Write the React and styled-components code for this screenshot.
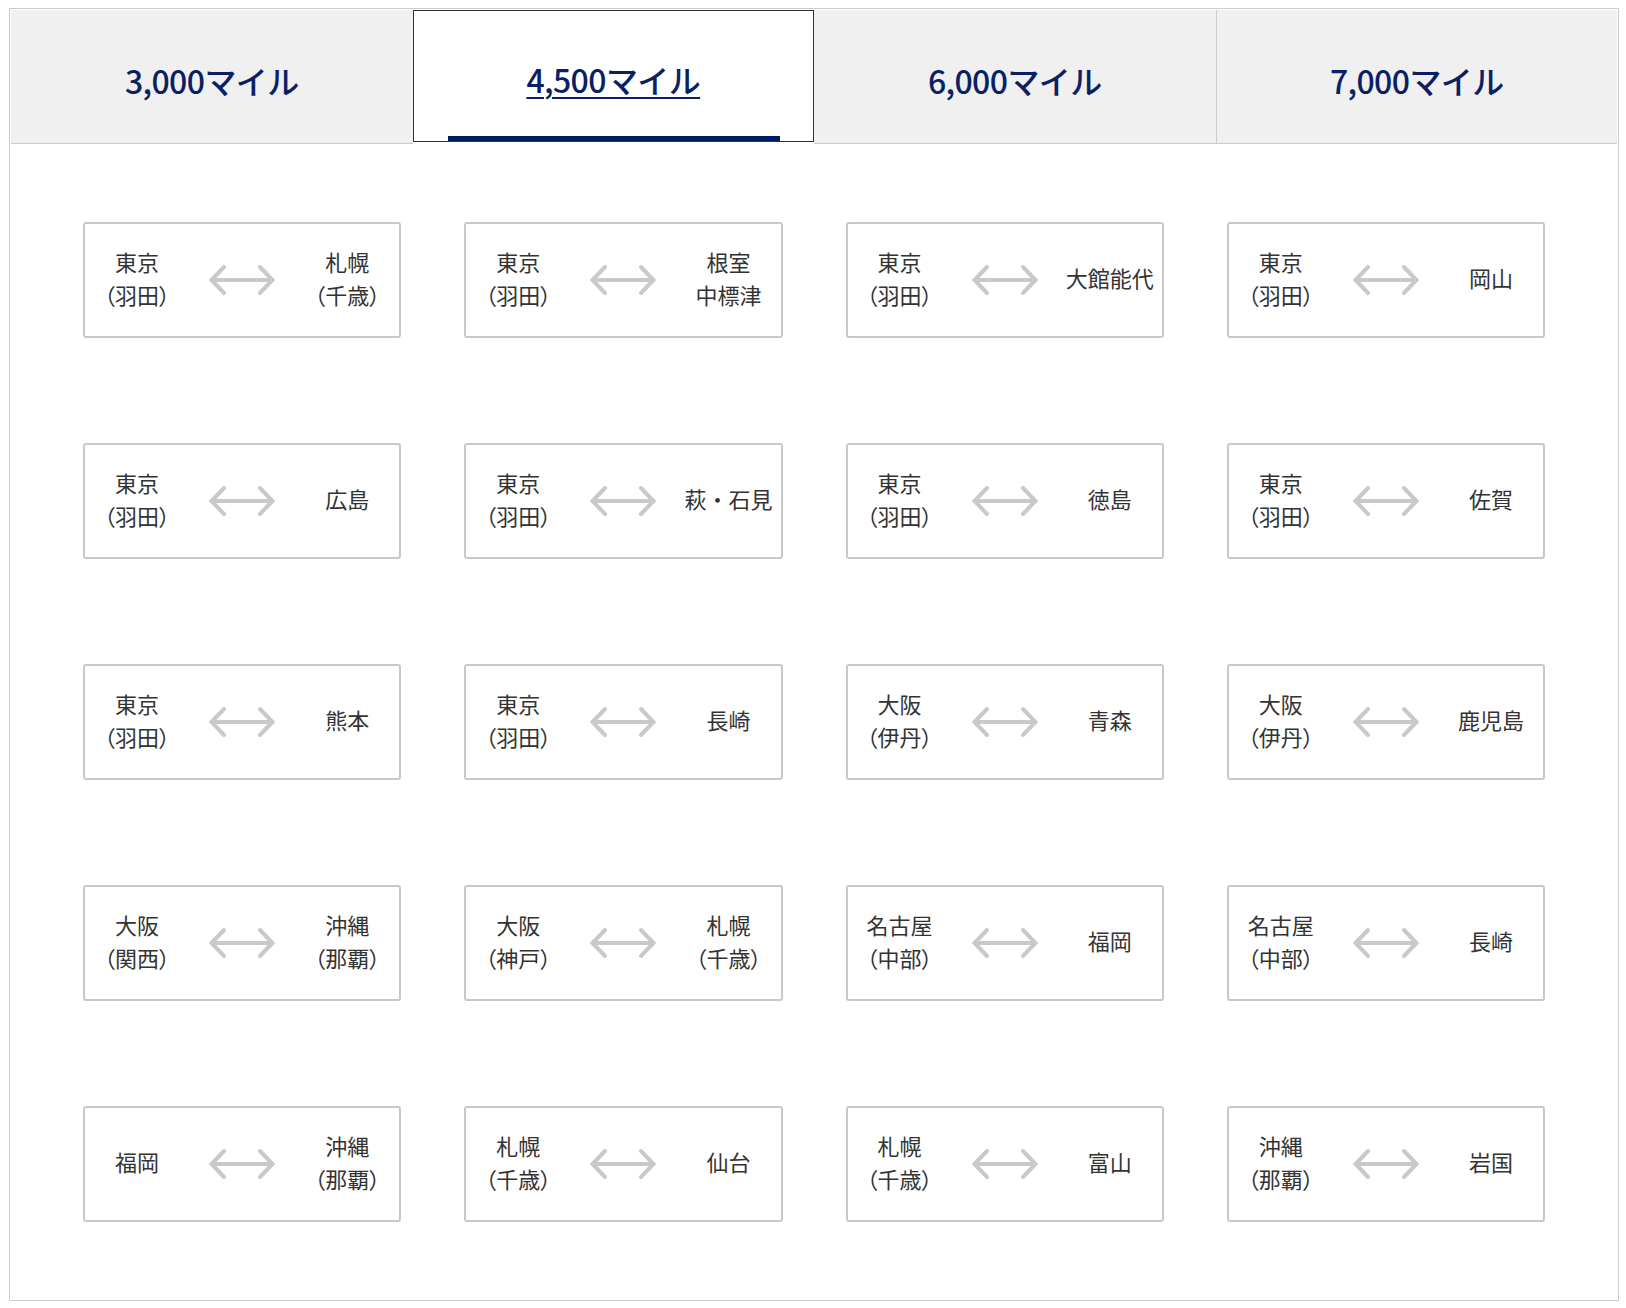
import React, { useState } from "react";
import styled, { createGlobalStyle } from "styled-components";

const GlobalStyle = createGlobalStyle`
  html, body { margin: 0; padding: 0; background: #fff; }
  body { font-family: "Noto Sans CJK JP", "Noto Sans", sans-serif; }
  * { box-sizing: border-box; }
`;

const Panel = styled.div`
  width: 1610px;
  margin: 8px 0 8px 9px;
  border: 1px solid #cccccc;
  background: #fff;
`;

const TabList = styled.div`
  display: grid;
  grid-template-columns: repeat(4, 1fr);
  align-items: start;
  padding: 1px 1px 0 1px;
`;

const Tab = styled.button`
  position: relative;
  min-width: 0;
  height: ${(p) => (p.$active ? "132px" : "134px")};
  margin: 0;
  padding: 6px 0 0;
  border: ${(p) => (p.$active ? "1px solid #333333" : "none")};
  border-bottom: ${(p) => (p.$active ? "1px solid #333333" : "1px solid #cccccc")};
  border-left: ${(p) => (p.$divider ? "1px solid #cccccc" : p.$active ? "1px solid #333333" : "none")};
  background: ${(p) => (p.$active ? "#ffffff" : "#f0f0f0")};
  color: #0b1f65;
  font-family: "Noto Sans CJK JP", "Noto Sans", sans-serif;
  font-size: 32px;
  font-weight: 500;
  letter-spacing: -0.6px;
  cursor: pointer;
  text-decoration: ${(p) => (p.$active ? "underline" : "none")};
  text-decoration-thickness: 2px;
  text-underline-offset: 4px;

  &::after {
    content: "";
    display: ${(p) => (p.$active ? "block" : "none")};
    position: absolute;
    left: 34px;
    right: 33px;
    bottom: 0;
    height: 5px;
    background: #001a66;
  }
`;

const Routes = styled.div`
  display: grid;
  grid-template-columns: repeat(4, 1fr);
  column-gap: 63px;
  row-gap: 105px;
  padding: 78px 73px 78px;
`;

const Card = styled.div`
  height: 116px;
  display: grid;
  grid-template-columns: 88px 1fr 88px;
  align-items: center;
  padding: 0 8px;
  border: 2px solid #c8c8c8;
  border-radius: 3px;
  background: #fff;
`;

const Place = styled.div`
  margin-top: -5px;
  text-align: center;
  color: #333333;
  font-size: 22px;
  line-height: 33px;
  white-space: nowrap;
`;

const Paren = styled.div`
  font-feature-settings: "palt";
`;

const ArrowWrap = styled.div`
  display: flex;
  justify-content: center;
  align-items: center;
`;

const Arrow = () => (
  <svg width="68" height="32" viewBox="0 0 68 32" fill="none">
    <g stroke="#c9c9c9" strokeWidth="4" strokeLinecap="round" strokeLinejoin="miter">
      <path d="M4 16 H64" />
      <path d="M16 3 L3.5 16 L16 29" />
      <path d="M52 3 L64.5 16 L52 29" />
    </g>
  </svg>
);

const tabs = ["3,000マイル", "4,500マイル", "6,000マイル", "7,000マイル"];

const routes = [
  [["東京", "（羽田）"], ["札幌", "（千歳）"]],
  [["東京", "（羽田）"], ["根室", "中標津"]],
  [["東京", "（羽田）"], ["大館能代"]],
  [["東京", "（羽田）"], ["岡山"]],
  [["東京", "（羽田）"], ["広島"]],
  [["東京", "（羽田）"], ["萩・石見"]],
  [["東京", "（羽田）"], ["徳島"]],
  [["東京", "（羽田）"], ["佐賀"]],
  [["東京", "（羽田）"], ["熊本"]],
  [["東京", "（羽田）"], ["長崎"]],
  [["大阪", "（伊丹）"], ["青森"]],
  [["大阪", "（伊丹）"], ["鹿児島"]],
  [["大阪", "（関西）"], ["沖縄", "（那覇）"]],
  [["大阪", "（神戸）"], ["札幌", "（千歳）"]],
  [["名古屋", "（中部）"], ["福岡"]],
  [["名古屋", "（中部）"], ["長崎"]],
  [["福岡"], ["沖縄", "（那覇）"]],
  [["札幌", "（千歳）"], ["仙台"]],
  [["札幌", "（千歳）"], ["富山"]],
  [["沖縄", "（那覇）"], ["岩国"]],
];

const PlaceName = ({ lines }) => (
  <Place>
    {lines.map((l, i) =>
      l.includes("（") ? <Paren key={i}>{l}</Paren> : <div key={i}>{l}</div>
    )}
  </Place>
);

export default function App() {
  const [active, setActive] = useState(1);
  return (
    <>
      <GlobalStyle />
      <Panel>
        <TabList>
          {tabs.map((t, i) => (
            <Tab
              key={t}
              $active={i === active}
              $divider={i === 3}
              onClick={() => setActive(i)}
            >
              {t}
            </Tab>
          ))}
        </TabList>
        <Routes>
          {routes.map(([from, to], i) => (
            <Card key={i}>
              <PlaceName lines={from} />
              <ArrowWrap>
                <Arrow />
              </ArrowWrap>
              <PlaceName lines={to} />
            </Card>
          ))}
        </Routes>
      </Panel>
    </>
  );
}
